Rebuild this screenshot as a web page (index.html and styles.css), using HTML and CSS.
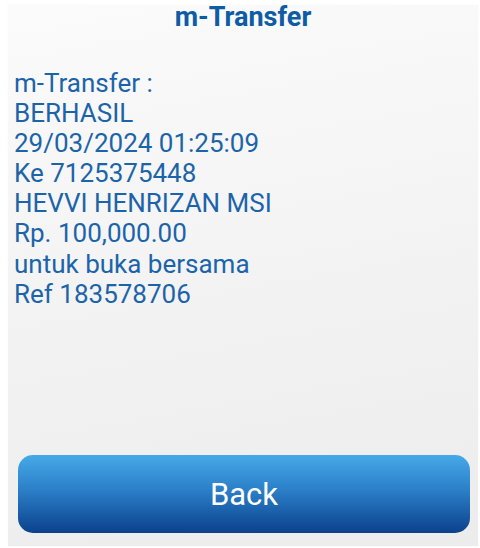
FILE: index.html
```html
<!DOCTYPE html>
<html>
<head>
<meta charset="utf-8">
<link rel="stylesheet" href="styles.css">
</head>
<body>
<div class="panel">
  <h1 class="title">m-Transfer</h1>
  <div class="message">
    <div>m-Transfer :</div>
    <div>BERHASIL</div>
    <div>29/03/2024 01:25:09</div>
    <div>Ke 7125375448</div>
    <div>HEVVI HENRIZAN MSI</div>
    <div>Rp. 100,000.00</div>
    <div>untuk buka bersama</div>
    <div>Ref 183578706</div>
  </div>
  <button class="back">Back</button>
</div>
</body>
</html>
```
FILE: styles.css
```css
html, body {
  margin: 0;
  padding: 0;
  background: #ffffff;
  font-family: Roboto, "Liberation Sans", sans-serif;
}
body {
  width: 480px;
  height: 548px;
  padding: 5px 2px 2px 8px;
  box-sizing: border-box;
}
.panel {
  height: 100%;
  display: flex;
  flex-direction: column;
  background: linear-gradient(170deg, #fbfbfb 0%, #f3f3f3 50%, #ececec 100%);
  box-shadow: 0 0 1px rgba(0,0,0,0.08);
}
.title {
  margin: 0;
  font-size: 27px;
  line-height: 24px;
  font-weight: 700;
  color: #0e5ba6;
  text-align: center;
}
.message {
  margin-top: 39px;
  padding-left: 6px;
  font-size: 26px;
  line-height: 30.1px;
  color: #1c64aa;
}
.back {
  margin: auto 8px 13px 10px;
  height: 78px;
  border: none;
  border-radius: 15px;
  background: linear-gradient(180deg, #46a9e7 0%, #2b7fc8 45%, #0b418c 100%);
  color: #ffffff;
  font-family: Roboto, "Liberation Sans", sans-serif;
  font-size: 31px;
  padding: 0;
}
```
